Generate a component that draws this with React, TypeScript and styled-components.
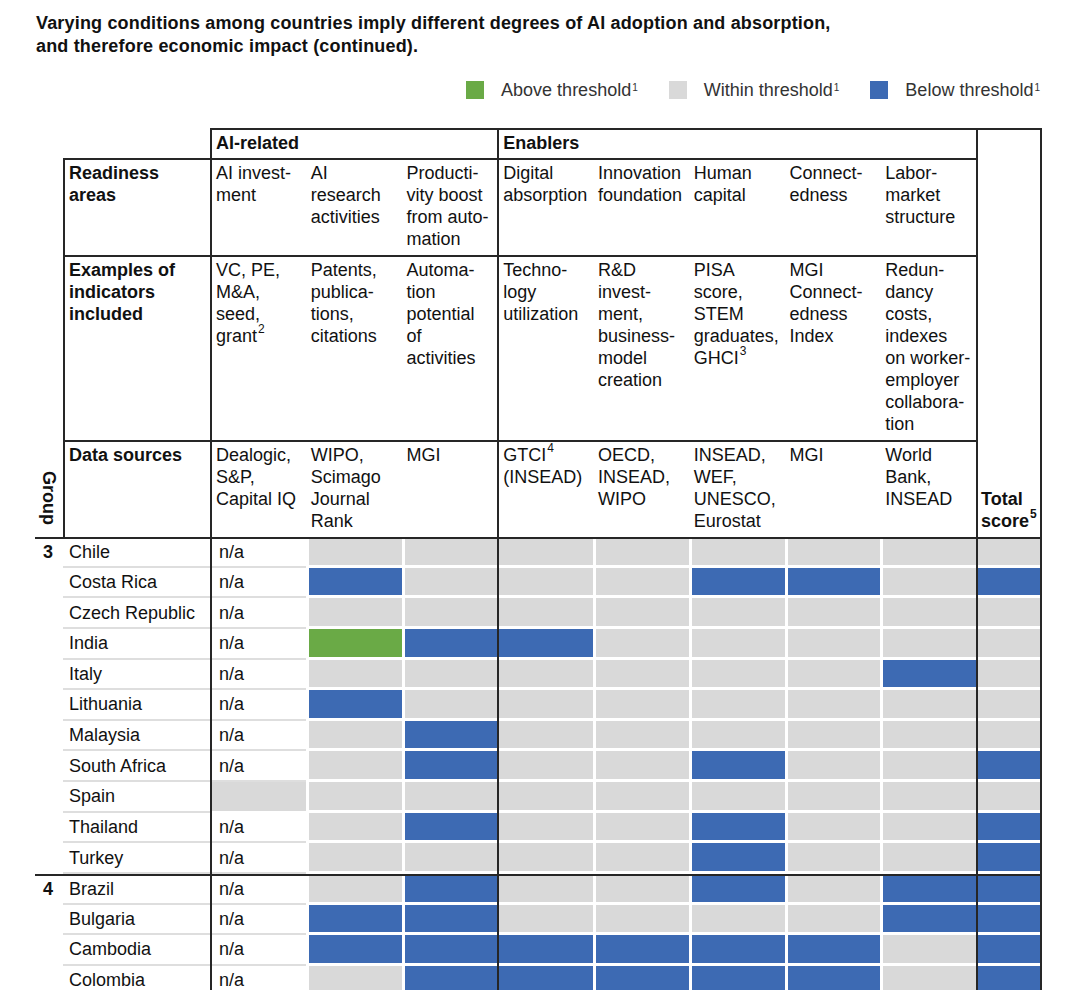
import React from 'react';
import styled, { createGlobalStyle } from 'styled-components';

const BLUE = '#3d6ab3';
const GREEN = '#6aaa46';
const GRAY = '#d9d9d9';
const LINE = '#262626';
const COLS = '28px 147px repeat(8, 95.75px) 66px';

const Global = createGlobalStyle`
  html, body { margin: 0; padding: 0; background: #fff; }
  body { font-family: "Liberation Sans", Arial, sans-serif; color: #111; }
`;

const Page = styled.div`
  width: 1080px;
  height: 990px;
  overflow: hidden;
  box-sizing: border-box;
  padding: 12px 0 0 35px;
`;

const Title = styled.h1`
  margin: 0 0 0 1px;
  font-size: 18px;
  line-height: 23px;
  font-weight: 700;
  letter-spacing: 0.17px;
  color: #111;
`;

const Legend = styled.div`
  display: flex;
  justify-content: flex-end;
  align-items: center;
  gap: 31px;
  width: 1005px;
  height: 18px;
  margin-top: 23px;
`;

const LegendItem = styled.div`
  display: flex;
  align-items: center;
  gap: 17px;
  font-size: 18px;
  line-height: 18px;
  color: #333;
  white-space: nowrap;
`;

const Swatch = styled.span<{ $c: string }>`
  display: block;
  width: 18px;
  height: 18px;
  background: ${p => p.$c};
`;

const LegendSup = styled.sup`
  font-size: 10px;
  vertical-align: top;
  position: relative;
  top: -2px;
  margin-left: 1px;
`;

const Header = styled.div`
  display: grid;
  grid-template-columns: ${COLS};
  grid-template-rows: 30px 97px 185px 97px;
  margin-top: 29px;
  font-size: 18px;
  line-height: 22px;
`;

const GroupHead = styled.div<{ $col: string }>`
  grid-column: ${p => p.$col};
  grid-row: 1;
  border-top: 2px solid ${LINE};
  border-left: 2px solid ${LINE};
  font-weight: 700;
  padding: 2px 4px;
`;

const TotalHead = styled.div`
  grid-column: 11;
  grid-row: 1 / 5;
  border-top: 2px solid ${LINE};
  border-left: 2px solid ${LINE};
  border-right: 2px solid ${LINE};
  display: flex;
  align-items: flex-end;
  padding: 0 0 5px 3px;
  font-weight: 700;
`;

const GroupLabel = styled.div`
  grid-column: 1;
  grid-row: 2 / 5;
  align-self: end;
  justify-self: center;
  writing-mode: vertical-rl;
  font-weight: 700;
  font-size: 18px;
  line-height: 20px;
  padding-bottom: 12px;
`;

const RowLabel = styled.div<{ $row: number }>`
  grid-column: 2;
  grid-row: ${p => p.$row};
  border-top: 2px solid ${LINE};
  border-left: 2px solid ${LINE};
  font-weight: 700;
  padding: 2px 4px;
`;

const HeadCell = styled.div<{ $row: number; $col: number; $bl?: boolean }>`
  grid-column: ${p => p.$col};
  grid-row: ${p => p.$row};
  border-top: 2px solid ${LINE};
  border-left: ${p => (p.$bl ? `2px solid ${LINE}` : 'none')};
  padding: 2px 0 0 ${p => (p.$bl ? 4 : 5)}px;
  white-space: nowrap;
`;

const Sup = styled.span`
  font-size: 12px;
  line-height: 0;
  position: relative;
  top: -9px;
  margin-left: 1px;
`;

const Body = styled.div`
  display: flex;
  flex-direction: column;
  width: 1007px;
  font-size: 18px;
  line-height: 22px;
`;

const Row = styled.div<{ $top?: boolean }>`
  display: grid;
  grid-template-columns: ${COLS};
  height: 30.64px;
  box-sizing: border-box;
  border-top: ${p => (p.$top ? `2px solid ${LINE}` : 'none')};
`;

const GroupNum = styled.div`
  font-weight: 700;
  padding: 0 0 3px 8px;
  display: flex;
  align-items: center;
`;

const Country = styled.div`
  display: flex;
  align-items: center;
  padding: 0 0 2px 6px;
  box-shadow: inset 0 -2px 0 #dedede;
  white-space: nowrap;
`;

const NaCell = styled.div<{ $empty?: boolean }>`
  display: flex;
  align-items: center;
  padding: 0 0 2px 7px;
  border-left: 2px solid ${LINE};
  background: ${p => (p.$empty ? GRAY : '#fff')};
  box-shadow: inset 0 -2px 0 ${p => (p.$empty ? '#fff' : '#dedede')};
`;

const Cell = styled.div<{ $c: string; $line?: boolean; $right?: boolean }>`
  border-left: ${p => (p.$line ? `2px solid ${LINE}` : '3px solid #fff')};
  border-right: ${p => (p.$right ? `2px solid ${LINE}` : 'none')};
  padding-bottom: 3px;
  background: ${p => p.$c};
  background-clip: content-box;
`;

type Code = 'g' | 'b' | 'G';
const colorOf = (c: Code) => (c === 'b' ? BLUE : c === 'G' ? GREEN : GRAY);

interface DataRow {
  group?: string;
  name: string;
  na: boolean;
  cells: string; // AIres, Prod, Digital, Innov, Human, Connect, Labor, Total
}

const rows: DataRow[] = [
  { group: '3', name: 'Chile', na: true, cells: 'gggggggg' },
  { name: 'Costa Rica', na: true, cells: 'bgggbbgb' },
  { name: 'Czech Republic', na: true, cells: 'gggggggg' },
  { name: 'India', na: true, cells: 'Gbbggggg' },
  { name: 'Italy', na: true, cells: 'ggggggbg' },
  { name: 'Lithuania', na: true, cells: 'bggggggg' },
  { name: 'Malaysia', na: true, cells: 'gbgggggg' },
  { name: 'South Africa', na: true, cells: 'gbggbggb' },
  { name: 'Spain', na: false, cells: 'gggggggg' },
  { name: 'Thailand', na: true, cells: 'gbggbggb' },
  { name: 'Turkey', na: true, cells: 'ggggbggb' },
  { group: '4', name: 'Brazil', na: true, cells: 'gbggbgbb' },
  { name: 'Bulgaria', na: true, cells: 'bbggggbb' },
  { name: 'Cambodia', na: true, cells: 'bbbbbbgb' },
  { name: 'Colombia', na: true, cells: 'gbbbbbgb' },
];

const readiness: React.ReactNode[] = [
  <>AI invest-<br />ment</>,
  <>AI<br />research<br />activities</>,
  <>Producti-<br />vity boost<br />from auto-<br />mation</>,
  <>Digital<br />absorption</>,
  <>Innovation<br />foundation</>,
  <>Human<br />capital</>,
  <>Connect-<br />edness</>,
  <>Labor-<br />market<br />structure</>,
];

const examples: React.ReactNode[] = [
  <>VC, PE,<br />M&amp;A,<br />seed,<br />grant<Sup>2</Sup></>,
  <>Patents,<br />publica-<br />tions,<br />citations</>,
  <>Automa-<br />tion<br />potential<br />of<br />activities</>,
  <>Techno-<br />logy<br />utilization</>,
  <>R&amp;D<br />invest-<br />ment,<br />business-<br />model<br />creation</>,
  <>PISA<br />score,<br />STEM<br />graduates,<br />GHCI<Sup>3</Sup></>,
  <>MGI<br />Connect-<br />edness<br />Index</>,
  <>Redun-<br />dancy<br />costs,<br />indexes<br />on worker-<br />employer<br />collabora-<br />tion</>,
];

const sources: React.ReactNode[] = [
  <>Dealogic,<br />S&amp;P,<br />Capital IQ</>,
  <>WIPO,<br />Scimago<br />Journal<br />Rank</>,
  <>MGI</>,
  <>GTCI<Sup>4</Sup><br />(INSEAD)</>,
  <>OECD,<br />INSEAD,<br />WIPO</>,
  <>INSEAD,<br />WEF,<br />UNESCO,<br />Eurostat</>,
  <>MGI</>,
  <>World<br />Bank,<br />INSEAD</>,
];

const headerRows: { row: number; label: React.ReactNode; cells: React.ReactNode[] }[] = [
  { row: 2, label: <>Readiness<br />areas</>, cells: readiness },
  { row: 3, label: <>Examples of<br />indicators<br />included</>, cells: examples },
  { row: 4, label: <>Data sources</>, cells: sources },
];

export default function App() {
  return (
    <>
      <Global />
      <Page>
        <Title>
          Varying conditions among countries imply different degrees of AI adoption and absorption,
          <br />
          and therefore economic impact (continued).
        </Title>
        <Legend>
          <LegendItem>
            <Swatch $c={GREEN} />
            <span>Above threshold<LegendSup>1</LegendSup></span>
          </LegendItem>
          <LegendItem>
            <Swatch $c={GRAY} />
            <span>Within threshold<LegendSup>1</LegendSup></span>
          </LegendItem>
          <LegendItem>
            <Swatch $c={BLUE} />
            <span>Below threshold<LegendSup>1</LegendSup></span>
          </LegendItem>
        </Legend>
        <Header>
          <GroupHead $col="3 / 6">AI-related</GroupHead>
          <GroupHead $col="6 / 11">Enablers</GroupHead>
          <TotalHead>
            <span>
              Total<br />score<Sup>5</Sup>
            </span>
          </TotalHead>
          <GroupLabel>Group</GroupLabel>
          {headerRows.map(hr => (
            <React.Fragment key={hr.row}>
              <RowLabel $row={hr.row}>{hr.label}</RowLabel>
              {hr.cells.map((c, i) => (
                <HeadCell key={i} $row={hr.row} $col={i + 3} $bl={i === 0 || i === 3}>
                  {c}
                </HeadCell>
              ))}
            </React.Fragment>
          ))}
        </Header>
        <Body>
          {rows.map(r => (
            <Row key={r.name} $top={!!r.group}>
              <GroupNum>{r.group ?? ''}</GroupNum>
              <Country>{r.name}</Country>
              <NaCell $empty={!r.na}>{r.na ? 'n/a' : ''}</NaCell>
              {r.cells.split('').map((c, i) => (
                <Cell
                  key={i}
                  $c={colorOf(c as Code)}
                  $line={i === 2 || i === 7}
                  $right={i === 7}
                />
              ))}
            </Row>
          ))}
        </Body>
      </Page>
    </>
  );
}
